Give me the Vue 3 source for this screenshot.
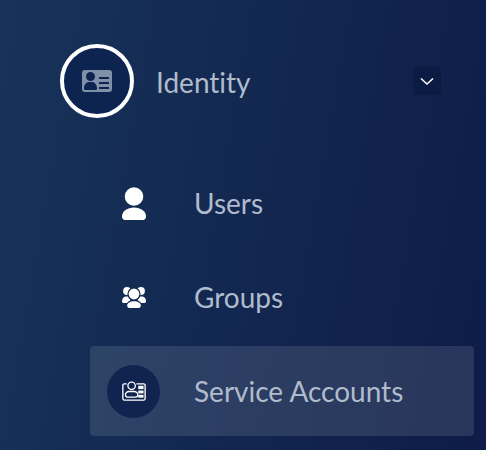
<template>
  <nav class="sidebar">
    <div class="group-head">
      <span class="head-icon">
        <svg width="30" height="22" viewBox="0 0 30 22">
          <path
            fill="#8090a8"
            fill-rule="evenodd"
            d="M3 0h24a3 3 0 0 1 3 3v16a3 3 0 0 1-3 3H3a3 3 0 0 1-3-3V3a3 3 0 0 1 3-3zM8.500 2a4.500 4.500 0 1 0 0 9 4.500 4.500 0 0 0 0-9zM3 20h11c1 0 1-1 1-2 0-3-2.500-6-4.500-6h-4C4.500 12 2 15 2 18c0 1 0 2 1 2zM17 7v2h10V7zM17 12v2h10v-2zM17 17v2h10v-2z"
          />
        </svg>
      </span>
      <span class="head-label">Identity</span>
      <span class="chevron">
        <svg width="14" height="9" viewBox="0 0 14 9">
          <path d="M1 1.500 7 7l6-5.500" fill="none" stroke="#fff" stroke-width="1.600" />
        </svg>
      </span>
    </div>
    <ul class="items">
      <li v-for="item in items" :key="item.label" class="item" :class="{ active: item.active }">
        <span class="item-icon">
          <svg v-if="item.icon === 'user'" width="24" height="33" viewBox="0 0 24 33">
            <circle cx="12" cy="9.500" r="9.300" fill="#fff" />
            <path fill="#fff" d="M12 20.500c6.500 0 12 3.500 12 9 0 2-1.300 3.500-3 3.500H3c-1.700 0-3-1.500-3-3.500 0-5.500 5.500-9 12-9z" />
          </svg>
          <svg v-else-if="item.icon === 'group'" width="24" height="21" viewBox="0 0 24 21">
            <g fill="#fff">
              <circle cx="5" cy="4" r="3.900" />
              <circle cx="19" cy="4" r="3.900" />
              <path d="M3.500 9.500h3l2 3.800c-1.600.6-2.800 1.500-3.600 2.700H1.500C.6 16 0 15.200 0 14.300 0 11.800 1.500 9.500 3.500 9.500z" />
              <path d="M20.500 9.500h-3l-2 3.800c1.600.6 2.800 1.500 3.600 2.700h3.400c.9 0 1.500-.8 1.500-1.700 0-2.500-1.500-4.800-3.500-4.800z" />
              <circle cx="12" cy="7" r="6" stroke="#13294f" stroke-width="1.200" />
              <path d="M12 14.300c3.800 0 6.800 1.700 6.800 4.200 0 1.400-.9 2.500-2 2.500H7.200c-1.100 0-2-1.100-2-2.500 0-2.500 3-4.200 6.800-4.200z" />
            </g>
          </svg>
          <span v-else class="badge">
            <svg width="24" height="20" viewBox="0 0 25 21">
              <g fill="none" stroke="#fff" stroke-width="1.400">
                <path d="M5 3H2.300A1.500 1.500 0 0 0 .8 4.500v14A1.500 1.500 0 0 0 2.300 20h20.400a1.500 1.500 0 0 0 1.500-1.500v-14A1.500 1.500 0 0 0 22.700 3H15" />
                <circle cx="10" cy="5" r="3.900" />
                <path d="M7.500 11h5c2.500 0 4 1.800 4 3.500 0 1.500-1 2.500-2.200 2.500H5.700c-1.200 0-2.200-1-2.200-2.500C3.500 12.800 5 11 7.500 11z" />
              </g>
              <g fill="#fff">
                <rect x="17" y="5" width="5.500" height="3.500" />
                <rect x="17" y="10" width="5.500" height="3" />
                <rect x="17" y="14.500" width="5.500" height="3" />
              </g>
            </svg>
          </span>
        </span>
        <span class="item-label">{{ item.label }}</span>
      </li>
    </ul>
  </nav>
</template>

<script setup>
const items = [
  { label: 'Users', icon: 'user' },
  { label: 'Groups', icon: 'group' },
  { label: 'Service Accounts', icon: 'service', active: true },
]
</script>

<style>
html,
body {
  margin: 0;
  background: #0e1c47;
}
</style>

<style scoped>
.sidebar {
  width: 486px;
  height: 450px;
  box-sizing: border-box;
  padding: 44px 12px 0 60px;
  overflow: hidden;
  background: linear-gradient(100deg, #17335a 0%, #0e1c47 100%);
  font-family: Lato, 'Liberation Sans', sans-serif;
  font-variant-ligatures: none;
}

.group-head {
  display: flex;
  align-items: center;
  height: 74px;
  padding-right: 33px;
}

.head-icon {
  display: flex;
  align-items: center;
  justify-content: center;
  flex-shrink: 0;
  width: 74px;
  height: 74px;
  box-sizing: border-box;
  border: 4px solid #fff;
  border-radius: 50%;
  background: #0d2450;
}

.head-label {
  flex: 1;
  margin-left: 22px;
  padding-top: 1px;
  font-size: 28px;
  color: #b0bbcc;
}

.chevron {
  display: flex;
  align-items: center;
  justify-content: center;
  width: 28px;
  height: 28px;
  border-radius: 3px;
  background: #0c1b44;
}

.items {
  list-style: none;
  margin: 40px 0 0 30px;
  padding: 0;
  display: flex;
  flex-direction: column;
  gap: 4px;
}

.item {
  display: flex;
  align-items: center;
  height: 90px;
  padding-left: 17px;
  border-radius: 4px;
}

.item.active {
  background: rgba(255, 255, 255, 0.11);
}

.item-icon {
  display: flex;
  align-items: center;
  justify-content: center;
  flex-shrink: 0;
  width: 53px;
  height: 53px;
}

.badge {
  display: flex;
  align-items: center;
  justify-content: center;
  width: 53px;
  height: 53px;
  border-radius: 50%;
  background: #10244f;
}

.item-label {
  margin-left: 34px;
  font-size: 28px;
  color: #b0bbcc;
}
</style>
